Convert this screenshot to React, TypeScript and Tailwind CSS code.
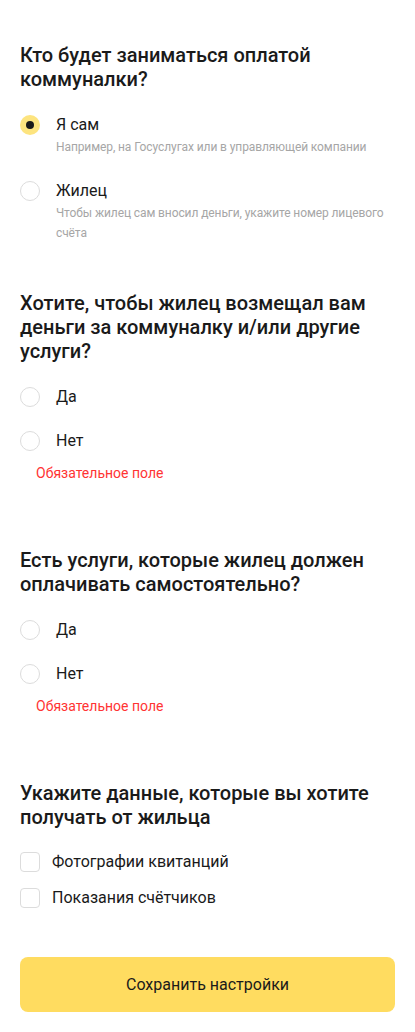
import React, { useState } from 'react';

type Option = { value: string; label: string; hint?: string };

function Radio({ checked }: { checked: boolean }) {
  return (
    <span
      className={
        checked
          ? 'flex h-5 w-5 shrink-0 items-center justify-center rounded-full bg-[#fde47f]'
          : 'flex h-5 w-5 shrink-0 rounded-full border border-[#dcdcdc] bg-white'
      }
    >
      {checked && <span className="h-2 w-2 rounded-full bg-[#1a1a1a]" />}
    </span>
  );
}

function RadioGroup({
  options,
  value,
  onChange,
  error,
}: {
  options: Option[];
  value: string | null;
  onChange: (v: string) => void;
  error?: boolean;
}) {
  return (
    <div className="mt-6 flex flex-col gap-6">
      {options.map((o) => (
        <button key={o.value} type="button" onClick={() => onChange(o.value)} className="flex items-start gap-4 text-left">
          <Radio checked={value === o.value} />
          <div className="flex flex-col">
            <span className="text-[16px] leading-5 text-[#1a1a1a]">{o.label}</span>
            {o.hint && (
              <span className="mt-0.5 text-[12px] leading-5 tracking-[-0.1px] text-[#a6a6a6]">{o.hint}</span>
            )}
          </div>
        </button>
      ))}
      {error && (
        <p className="-mt-2.5 pl-4 text-[14px] leading-4 text-[#ff3333]">Обязательное поле</p>
      )}
    </div>
  );
}

function Checkbox({ label, checked, onChange }: { label: string; checked: boolean; onChange: () => void }) {
  return (
    <button type="button" onClick={onChange} className="flex items-center gap-3 text-left">
      <span className="flex h-5 w-5 shrink-0 items-center justify-center rounded-[4px] border border-[#dcdcdc] bg-white">
        {checked && <span className="h-2 w-2 bg-[#1a1a1a]" />}
      </span>
      <span className="text-[16px] leading-5 text-[#1a1a1a]">{label}</span>
    </button>
  );
}

export default function App() {
  const [payer, setPayer] = useState<string | null>('self');
  const [refund, setRefund] = useState<string | null>(null);
  const [ownServices, setOwnServices] = useState<string | null>(null);
  const [photos, setPhotos] = useState(false);
  const [meters, setMeters] = useState(false);

  const yesNo: Option[] = [
    { value: 'yes', label: 'Да' },
    { value: 'no', label: 'Нет' },
  ];

  return (
    <div className="min-h-screen bg-white px-5 pt-[43px] pb-[21px] font-['Roboto','Noto_Sans',sans-serif] text-[#1a1a1a]">
      <section>
        <h2 className="text-[20px] font-medium leading-6">Кто будет заниматься оплатой коммуналки?</h2>
        <RadioGroup
          value={payer}
          onChange={setPayer}
          options={[
            { value: 'self', label: 'Я сам', hint: 'Например, на Госуслугах или в управляющей компании' },
            { value: 'tenant', label: 'Жилец', hint: 'Чтобы жилец сам вносил деньги, укажите номер лицевого счёта' },
          ]}
        />
      </section>

      <section className="mt-12">
        <h2 className="text-[20px] font-medium leading-6">
          Хотите, чтобы жилец возмещал вам деньги за коммуналку и/или другие услуги?
        </h2>
        <RadioGroup value={refund} onChange={setRefund} options={yesNo} error={refund === null} />
      </section>

      <section className="mt-[67px]">
        <h2 className="text-[20px] font-medium leading-6">Есть услуги, которые жилец должен оплачивать самостоятельно?</h2>
        <RadioGroup value={ownServices} onChange={setOwnServices} options={yesNo} error={ownServices === null} />
      </section>

      <section className="mt-[67px]">
        <h2 className="text-[20px] font-medium leading-6">Укажите данные, которые вы хотите получать от жильца</h2>
        <div className="mt-[23px] flex flex-col gap-4">
          <Checkbox label="Фотографии квитанций" checked={photos} onChange={() => setPhotos(!photos)} />
          <Checkbox label="Показания счётчиков" checked={meters} onChange={() => setMeters(!meters)} />
        </div>
      </section>

      <button
        type="button"
        className="mt-[49px] flex h-[55px] w-full items-center justify-center rounded-lg bg-[#ffdc60] text-[16px] text-[#1a1a1a]"
      >
        Сохранить настройки
      </button>
    </div>
  );
}
